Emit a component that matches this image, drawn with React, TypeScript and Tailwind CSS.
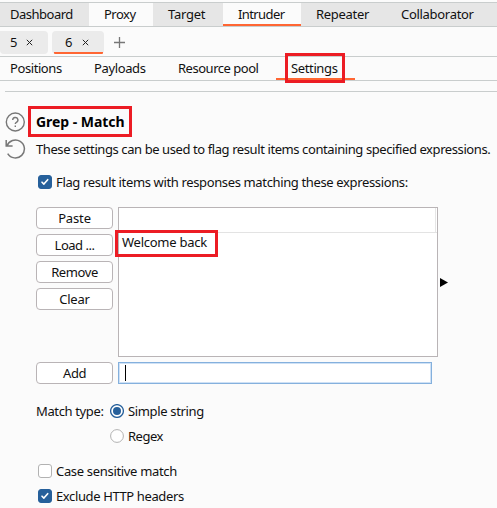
import type { ReactNode } from 'react';

function Close() {
  return (
    <svg width="7" height="7" viewBox="0 0 7 7" className="block shrink-0" stroke="#222" strokeWidth="1">
      <path d="M0.8 0.8 6.2 6.2M6.2 0.8 0.8 6.2" />
    </svg>
  );
}

function MainTab({ className, text, label, active }: { className: string; text: string; label: string; active?: boolean }) {
  return (
    <div className={`h-[23px] shrink-0 border-b-2 leading-[23px] ${active ? 'border-[#ff6633]' : 'border-transparent'} ${className}`}>
      <span className={text}>{label}</span>
    </div>
  );
}

function Button({ children, text = '' }: { children: ReactNode; text?: string }) {
  return (
    <button className="flex h-[22px] w-[77px] items-center justify-center rounded-[4px] border border-[#b9b4b6] bg-white">
      <span className={text}>{children}</span>
    </button>
  );
}

function Check({ on }: { on?: boolean }) {
  return (
    <span className={`flex size-[14px] shrink-0 items-center justify-center rounded-[3px] border ${on ? 'border-[#26609b] bg-[#26609b]' : 'border-[#b2b2b2] bg-white'}`}>
      {on && (
        <svg width="12" height="12" viewBox="0 0 12 12" className="shrink-0" fill="none" stroke="#fff" strokeWidth="1.6" strokeLinecap="round" strokeLinejoin="round">
          <path d="M3 6.2 4.9 8.1 8.7 3.7" />
        </svg>
      )}
    </span>
  );
}

function Radio({ on }: { on?: boolean }) {
  return (
    <svg width="14" height="14" viewBox="0 0 14 14" className="shrink-0">
      <circle cx="7" cy="7" r="6.4" fill="#fff" stroke={on ? '#26609b' : '#b2b2b2'} strokeWidth={on ? 1.3 : 1} />
      {on && <circle cx="7" cy="7" r="4" fill="#26609b" />}
    </svg>
  );
}

export default function App() {
  return (
    <div className="relative h-[508px] w-[497px] overflow-hidden bg-[#fbfbfb] font-['Noto_Sans',sans-serif] text-[13px] leading-[18px] whitespace-nowrap text-[#111]">
      <div className="mt-[2px] flex h-[25px] border-y border-[#c9cdcd]">
        <MainTab className="w-[89px] bg-[#e6e6e6] pl-[10px]" text="tracking-[-0.5px]" label="Dashboard" />
        <MainTab className="w-[64px] pl-[15px]" text="tracking-[-0.5px]" label="Proxy" />
        <MainTab className="w-[70px] bg-[#e6e6e6] pl-[15px]" text="tracking-[-0.25px]" label="Target" />
        <MainTab className="w-[78px] pl-[15px]" text="tracking-[-0.6px]" label="Intruder" active />
        <MainTab className="w-[85px] bg-[#e6e6e6] pl-[15px]" text="tracking-[-0.3px]" label="Repeater" />
        <MainTab className="w-[111px] bg-[#e6e6e6] pl-[15px]" text="tracking-[-0.3px]" label="Collaborator" />
      </div>

      <div className="flex h-[30px] border-b border-[#c9cdcd] pt-1">
        <div className="flex h-[23px] w-12 rounded-r-[4px] rounded-bl-[4px] bg-[#ebebeb] pl-[10px]">
          <span className="mt-[2px] w-[16px]">5</span>
          <div className="pt-[8px]"><Close /></div>
        </div>
        <div className="ml-1 flex h-[23px] w-[52px] flex-col rounded-[4px] bg-[#ebebeb]">
          <div className="flex h-[21px] pl-[13px]">
            <span className="mt-[2px] w-[17px]">6</span>
            <div className="pt-[8px]"><Close /></div>
          </div>
          <div className="mx-auto h-[2px] w-[49px] rounded-b-[1px] bg-[#ff6633]" />
        </div>
        <svg width="13" height="13" viewBox="0 0 13 13" className="mt-[5px] ml-[9px]" stroke="#777" strokeWidth="1.3">
          <path d="M6.5 1V12M1 6.5H12" />
        </svg>
      </div>

      <div className="flex h-[24px] border-b border-[#c9cdcd] leading-[23px]">
        <span className="ml-[10px] w-[84px] tracking-[-0.42px]">Positions</span>
        <span className="w-[84px] tracking-[-0.37px]">Payloads</span>
        <span className="w-[98px] tracking-[-0.48px]">Resource pool</span>
        <div className="h-[23px] w-[79px] border-b-2 border-[#ff6633] pl-[15px] tracking-[-0.37px]">Settings</div>
      </div>
      <div className="mt-[10px] ml-[5px] h-px bg-[#c9cdcd]" />

      <div className="mt-[13px] flex h-[32px] items-center">
        <svg width="20" height="20" viewBox="0 0 20 20" className="mt-[2px] ml-[5px] shrink-0" fill="none" stroke="#777" strokeWidth="1.4">
          <circle cx="10.3" cy="10" r="9" />
          <path d="M7.7 8a2.6 2.6 0 1 1 3.7 2.4c-.8.4-1.1.7-1.1 1.6" />
          <path d="M10.3 13.4v1.5" />
        </svg>
        <div className="ml-[3px] h-[31px] w-[104px] border-[3px] border-[#ec1c24] pl-[5px] text-[14px] leading-[25px] font-bold text-black">
          <span className="tracking-[-0.05px]">Grep - Match</span>
        </div>
      </div>
      <div className="mt-px flex h-[22px] items-center">
        <svg width="21" height="20" viewBox="0 0 21 20" className="ml-[5px] shrink-0" fill="none" stroke="#777" strokeWidth="1.5">
          <path d="M1.2 1V7.1H7.6M1.9 7A9 9 0 1 1 2.7 14.6" />
        </svg>
        <span className="ml-[10px] tracking-[-0.41px]">These settings can be used to flag result items containing specified expressions.</span>
      </div>

      <div className="mt-[12px] flex h-[20px] items-center pl-[38px]">
        <Check on />
        <span className="ml-1 tracking-[-0.36px]">Flag result items with responses matching these expressions:</span>
      </div>

      <div className="mt-[15px] flex h-[150px] pl-9">
        <div className="flex w-[82px] flex-col gap-[5px]">
          <Button text="tracking-[-0.15px]">Paste</Button>
          <Button text="tracking-[-0.5px]">Load ...</Button>
          <Button text="tracking-[-0.4px]">Remove</Button>
          <Button text="tracking-[-0.2px]">Clear</Button>
        </div>
        <div className="h-[150px] w-[320px] border border-[#b9b4b6] bg-white">
          <div className="mr-px h-[24px] border-r border-[#e6e6e6]" />
          <div className="h-px bg-[#e3e3e3]" />
          <div className="pl-[3px] tracking-[-0.25px]">Welcome back</div>
        </div>
        <svg width="8" height="9" viewBox="0 0 8 9" className="mt-[71px] ml-[2px]">
          <path d="M0 0 8 4.5 0 9Z" fill="#000" />
        </svg>
      </div>
      <div className="absolute top-[230px] left-[115px] h-[27px] w-[103px] border-[3px] border-[#ec1c24]" />
      <div className="absolute top-[53px] left-[285px] h-[30px] w-[60px] border-[3px] border-[#ec1c24]" />

      <div className="mt-[5px] flex pl-9">
        <Button text="tracking-[-0.5px]">Add</Button>
        <div className="ml-[5px] flex h-[22px] w-[314px] border border-[#84b0dd] bg-white">
          <div className="flex flex-1 border border-[#cfe1f5] pt-px pl-[5px]">
            <div className="h-4 w-px bg-black" />
          </div>
        </div>
      </div>

      <div className="mt-[18px] flex h-[18px] items-center pl-9">
        <span className="w-[74px] tracking-[-0.36px]">Match type:</span>
        <Radio on />
        <span className="ml-1 tracking-[-0.35px]">Simple string</span>
      </div>
      <div className="mt-[7px] flex h-[18px] items-center pl-[110px]">
        <Radio />
        <span className="ml-1 tracking-[-0.5px]">Regex</span>
      </div>
      <div className="mt-[17px] flex h-[18px] items-center pl-[38px]">
        <Check />
        <span className="ml-1 tracking-[-0.32px]">Case sensitive match</span>
      </div>
      <div className="mt-[7px] flex h-[18px] items-center pl-[38px]">
        <Check on />
        <span className="ml-1 tracking-[-0.38px]">Exclude HTTP headers</span>
      </div>
    </div>
  );
}
